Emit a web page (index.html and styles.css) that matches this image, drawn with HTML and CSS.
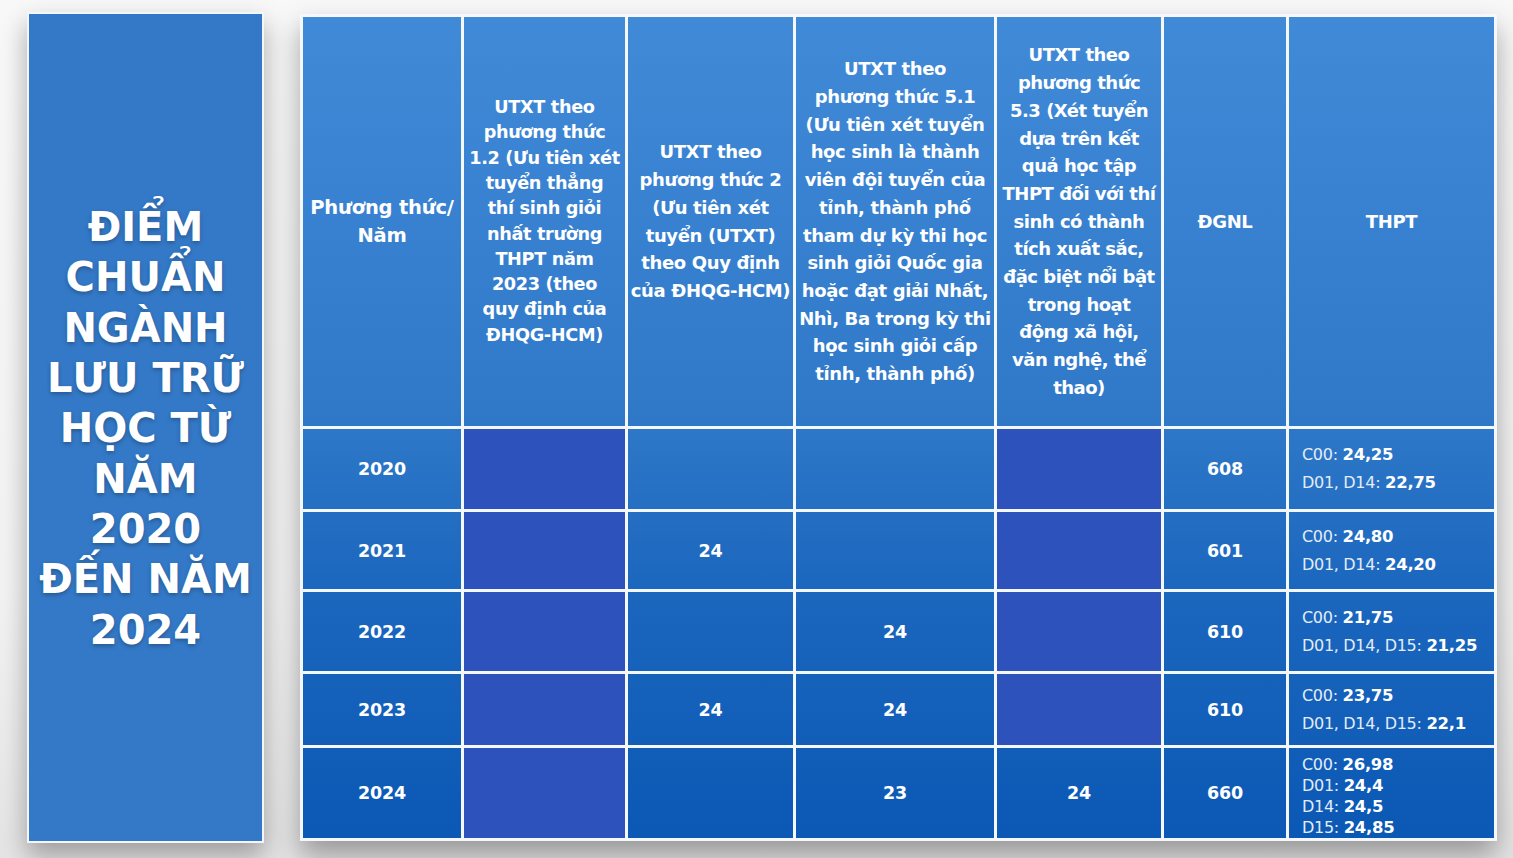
FILE: index.html
```html
<!DOCTYPE html>
<html lang="vi">
<head>
<meta charset="utf-8">
<title>Điểm chuẩn ngành Lưu trữ học</title>
<link rel="stylesheet" href="styles.css">
</head>
<body>
<div class="page">
  <aside class="panel">
    <h1 class="title">ĐIỂM<br>CHUẨN<br>NGÀNH<br>LƯU TRỮ<br>HỌC TỪ<br>NĂM<br>2020<br>ĐẾN NĂM<br>2024</h1>
  </aside>
  <div class="grid">
    <div class="cell head first">Phương thức/<br>Năm</div>
    <div class="cell head tight">UTXT theo<br>phương thức<br>1.2 (Ưu tiên xét<br>tuyển thẳng<br>thí sinh giỏi<br>nhất trường<br>THPT năm<br>2023 (theo<br>quy định của<br>ĐHQG-HCM)</div>
    <div class="cell head">UTXT theo<br>phương thức 2<br>(Ưu tiên xét<br>tuyển (UTXT)<br>theo Quy định<br>của ĐHQG-HCM)</div>
    <div class="cell head">UTXT theo<br>phương thức 5.1<br>(Ưu tiên xét tuyển<br>học sinh là thành<br>viên đội tuyển của<br>tỉnh, thành phố<br>tham dự kỳ thi học<br>sinh giỏi Quốc gia<br>hoặc đạt giải Nhất,<br>Nhì, Ba trong kỳ thi<br>học sinh giỏi cấp<br>tỉnh, thành phố)</div>
    <div class="cell head narrow">UTXT theo<br>phương thức<br>5.3 (Xét tuyển<br>dựa trên kết<br>quả học tập<br>THPT đối với thí<br>sinh có thành<br>tích xuất sắc,<br>đặc biệt nổi bật<br>trong hoạt<br>động xã hội,<br>văn nghệ, thể<br>thao)</div>
    <div class="cell head">ĐGNL</div>
    <div class="cell head">THPT</div>

    <div class="cell num">2020</div>
    <div class="cell dark"></div>
    <div class="cell"></div>
    <div class="cell"></div>
    <div class="cell dark"></div>
    <div class="cell num">608</div>
    <div class="cell score"><span>C00: <b>24,25</b></span><span>D01, D14: <b>22,75</b></span></div>

    <div class="cell num">2021</div>
    <div class="cell dark"></div>
    <div class="cell num">24</div>
    <div class="cell"></div>
    <div class="cell dark"></div>
    <div class="cell num">601</div>
    <div class="cell score"><span>C00: <b>24,80</b></span><span>D01, D14: <b>24,20</b></span></div>

    <div class="cell num">2022</div>
    <div class="cell dark"></div>
    <div class="cell"></div>
    <div class="cell num">24</div>
    <div class="cell dark"></div>
    <div class="cell num">610</div>
    <div class="cell score"><span>C00: <b>21,75</b></span><span>D01, D14, D15: <b>21,25</b></span></div>

    <div class="cell num">2023</div>
    <div class="cell dark"></div>
    <div class="cell num">24</div>
    <div class="cell num">24</div>
    <div class="cell dark"></div>
    <div class="cell num">610</div>
    <div class="cell score"><span>C00: <b>23,75</b></span><span>D01, D14, D15: <b>22,1</b></span></div>

    <div class="cell num">2024</div>
    <div class="cell dark"></div>
    <div class="cell"></div>
    <div class="cell num">23</div>
    <div class="cell num">24</div>
    <div class="cell num">660</div>
    <div class="cell score compact"><span>C00: <b>26,98</b></span><span>D01: <b>24,4</b></span><span>D14: <b>24,5</b></span><span>D15: <b>24,85</b></span></div>
  </div>
</div>
</body>
</html>
```

FILE: styles.css
```css
html, body {
  margin: 0;
  padding: 0;
}

body {
  width: 1513px;
  height: 858px;
  overflow: hidden;
  background: linear-gradient(180deg, #f8f8f8 0%, #f2f2f2 70%, #e4e4e4 100%);
  font-family: "DejaVu Sans", "Noto Sans", sans-serif;
  color: #ffffff;
}

.page {
  display: flex;
  align-items: flex-start;
  padding: 12px 0 0 27px;
}

.panel {
  box-sizing: border-box;
  width: 237px;
  height: 831px;
  margin-right: 36px;
  background: #3479c7;
  border: 2px solid #f3f7fb;
  box-shadow: 0 12px 24px rgba(0, 0, 0, 0.32);
  display: flex;
  align-items: center;
  justify-content: center;
}

.title {
  margin: 0;
  padding-top: 2px;
  font-size: 40px;
  line-height: 50.3px;
  font-weight: 700;
  text-align: center;
  white-space: nowrap;
  color: #ffffff;
  text-shadow: 0 2px 4px rgba(0, 0, 0, 0.28);
}

.grid {
  box-sizing: border-box;
  width: 1197px;
  height: 827px;
  margin-top: 2px;
  display: grid;
  grid-template-columns: 161px 164px 168px 201px 167px 125px 208px;
  grid-template-rows: 412px 83px 80px 82px 74px 93px;
  background: linear-gradient(180deg, #418ad8 0%, #3079c9 48%, #1b67be 70%, #0b58b5 100%);
  border-right: 3px solid #f4f8fc;
  border-bottom: 3px solid #f4f8fc;
  box-shadow: 0 14px 26px rgba(0, 0, 0, 0.34);
}

.cell {
  box-sizing: border-box;
  border-left: 3px solid #f4f8fc;
  border-top: 3px solid #f4f8fc;
  display: flex;
  align-items: center;
  justify-content: center;
  text-align: center;
  white-space: nowrap;
}

.head {
  font-size: 18px;
  font-weight: 700;
  line-height: 27.7px;
  letter-spacing: -0.35px;
}

.head.first {
  font-size: 19.5px;
  letter-spacing: -0.2px;
}

.head.tight {
  font-size: 17.7px;
  line-height: 25.3px;
}

.head.narrow {
  letter-spacing: -0.5px;
}

.dark {
  background: #2e52bb;
}

.num {
  font-size: 17.5px;
  font-weight: 700;
  letter-spacing: -0.2px;
}

.score {
  flex-direction: column;
  align-items: flex-start;
  padding-left: 13px;
  font-size: 16px;
  line-height: 28px;
  text-align: left;
  color: #e3ecf8;
  letter-spacing: -0.3px;
}

.score span {
  display: block;
}

.score b {
  color: #ffffff;
  font-size: 16.5px;
  font-weight: 700;
}

.score.compact {
  padding-top: 6px;
  line-height: 21.2px;
}
```
